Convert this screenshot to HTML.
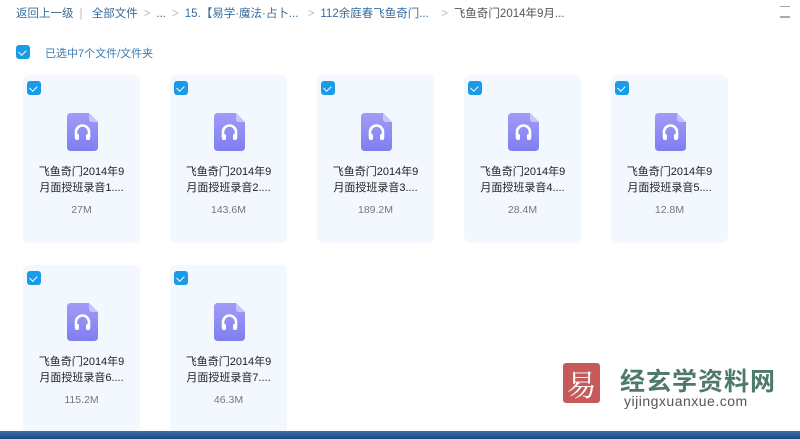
<!DOCTYPE html>
<html><head><meta charset="utf-8"><style>
body{margin:0;width:800px;height:439px;overflow:hidden;background:#fff;font-family:"Liberation Sans","Noto Sans CJK SC",sans-serif;position:relative}
.bc{position:absolute;top:5px;left:16px;font-size:11.5px;color:#3a6c9a;white-space:nowrap}
.bc span{margin-right:6px}.g{color:#bbb}
.cb{position:absolute;width:14px;height:14px;background:#1a9be8;border-radius:3px}
.cb:after{content:"";position:absolute;left:4px;top:2.5px;width:3.5px;height:6px;border:solid #fff;border-width:0 1.5px 1.5px 0;transform:rotate(45deg)}
.card{position:absolute;width:117px;height:168px;background:#f2f8fe;border-radius:6px}
.card .cb{left:4px;top:6px}
.ic{position:absolute;left:44px;top:38px}
.t{position:absolute;top:90px;left:0;width:117px;text-align:center;font-size:11px;line-height:15.5px;color:#222}
.s{position:absolute;top:129px;width:117px;text-align:center;font-size:10.5px;color:#777}
.tb{position:absolute;left:0;top:431px;width:800px;height:8px;background:linear-gradient(#3d6fa6,#1e4a80)}
</style></head><body>
<div class="bc"><span>返回上一级</span><span class="g">|</span> <span>全部文件</span><span class="g">&gt;</span><span>...</span><span class="g">&gt;</span><span>15.【易学·魔法·占卜...</span> <span class="g">&gt;</span><span>112余庭春飞鱼奇门...</span> &nbsp;<span class="g">&gt;</span><span style="color:#555">飞鱼奇门2014年9月...</span></div>
<div style="position:absolute;left:780px;top:6px;width:10px;height:12px;border-top:1.5px solid #aaa;border-bottom:1.5px solid #aaa;box-sizing:border-box"></div>
<div style="position:absolute;left:780px;top:16px;width:10px;height:1.5px;background:#aaa"></div>
<div class="cb" style="left:16px;top:45px"></div>
<div style="position:absolute;left:45px;top:45px;font-size:11px;color:#3a7ab0">已选中7个文件/文件夹</div>

<div id="cards"></div>
<script>
const d=[["1","27M"],["2","143.6M"],["3","189.2M"],["4","28.4M"],["5","12.8M"],["6","115.2M"],["7","46.3M"]];
let h="";
d.forEach((v,i)=>{const x=23+(i%5)*147,y=75+Math.floor(i/5)*190;
h+=`<div class="card" style="left:${x}px;top:${y}px"><div class="cb"></div>
<svg class="ic" width="31" height="38" viewBox="0 0 31 38"><defs><linearGradient id="g${i}" x1="0" y1="0" x2="0" y2="1"><stop offset="0" stop-color="#a19cf8"/><stop offset="1" stop-color="#7f7ef0"/></linearGradient></defs><path d="M4 0H22L31 9V34Q31 38 27 38H4Q0 38 0 34V4Q0 0 4 0Z" fill="url(#g${i})"/><path d="M22 0V6Q22 9 25 9H31Z" fill="#c7c4fb"/><path d="M9 25V19A6.5 6.5 0 0 1 22 19V25" fill="none" stroke="#fff" stroke-width="2.6"/><rect x="8" y="21" width="4" height="6" rx="1.5" fill="#fff"/><rect x="19" y="21" width="4" height="6" rx="1.5" fill="#fff"/></svg>
<div class="t">飞鱼奇门2014年9<br>月面授班录音${v[0]}....</div><div class="s">${v[1]}</div></div>`});
document.getElementById("cards").innerHTML=h;
</script>
<div style="position:absolute;left:563px;top:363px;width:37px;height:40px;background:#c65a5a;border-radius:3px;color:#fff;font-size:30px;line-height:40px;text-align:center;font-family:'Noto Serif CJK SC',serif">易</div>
<div style="position:absolute;left:620px;top:362px;font-size:25px;font-weight:bold;color:#4f7a6a;letter-spacing:1px">经玄学资料网</div>
<div style="position:absolute;left:624px;top:393px;font-size:14px;color:#555;letter-spacing:0.5px">yijingxuanxue.com</div>
<div class="tb"></div>
</body></html>
